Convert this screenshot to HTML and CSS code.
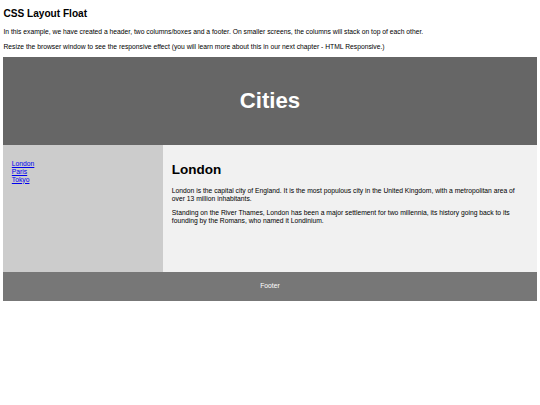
FILE: index.html
```
<!DOCTYPE html>
<html lang="en">
<head>
<meta charset="utf-8">
<title>CSS Template</title>
<link rel="stylesheet" href="styles.css">
</head>
<body>
<h2 class="title">CSS Layout Float</h2>
<p class="intro">In this example, we have created a header, two columns/boxes and a footer. On smaller screens, the columns will stack on top of each other.</p>
<p class="intro">Resize the browser window to see the responsive effect (you will learn more about this in our next chapter - HTML Responsive.)</p>

<header class="site-header">
  <h2 class="site-title">Cities</h2>
</header>

<section class="columns">
  <nav class="side-nav">
    <ul class="nav-list">
      <li><a class="nav-link" href="#">London</a></li>
      <li><a class="nav-link" href="#">Paris</a></li>
      <li><a class="nav-link" href="#">Tokyo</a></li>
    </ul>
  </nav>
  <article class="content">
    <h1 class="content-title">London</h1>
    <p class="content-text">London is the capital city of England. It is the most populous city in the United Kingdom, with a metropolitan area of over 13 million inhabitants.</p>
    <p class="content-text">Standing on the River Thames, London has been a major settlement for two millennia, its history going back to its founding by the Romans, who named it Londinium.</p>
  </article>
</section>

<footer class="site-footer">
  <p class="footer-text">Footer</p>
</footer>
</body>
</html>
```

FILE: styles.css
```
* {
  box-sizing: border-box;
}

html {
  margin: 0;
  padding: 0;
}

body {
  margin: 0;
  padding: 0 3.375px 3.375px;
  font-family: "Liberation Sans", Arial, Helvetica, sans-serif;
  font-size: 6.75px;
  line-height: 1.15;
  color: #000;
  background: #fff;
}

.title {
  font-size: 1.5em;
  margin: 0 0 0.83em;
  padding-top: 0.83em;
}

.intro {
  margin: 1em 0;
}

.site-header {
  background-color: #666;
  padding: 12.66px;
  text-align: center;
  font-size: 14.77px;
  color: #fff;
}

.site-title {
  font-size: 1.5em;
  margin: 0.83em 0;
}

.columns {
  display: flex;
}

.side-nav {
  width: 30%;
  height: 126.56px;
  background: #ccc;
  padding: 8.44px;
}

.nav-list {
  list-style-type: none;
  padding: 0;
  margin: 1em 0;
}

.nav-link {
  color: #0000ee;
}

.content {
  width: 70%;
  height: 126.56px;
  padding: 8.44px;
  background-color: #f1f1f1;
}

.content-title {
  font-size: 2em;
  margin: 0.67em 0;
}

.content-text {
  margin: 1em 0;
}

.site-footer {
  background-color: #777;
  padding: 4.22px;
  text-align: center;
  color: #fff;
}

.footer-text {
  margin: 1em 0;
}
```
